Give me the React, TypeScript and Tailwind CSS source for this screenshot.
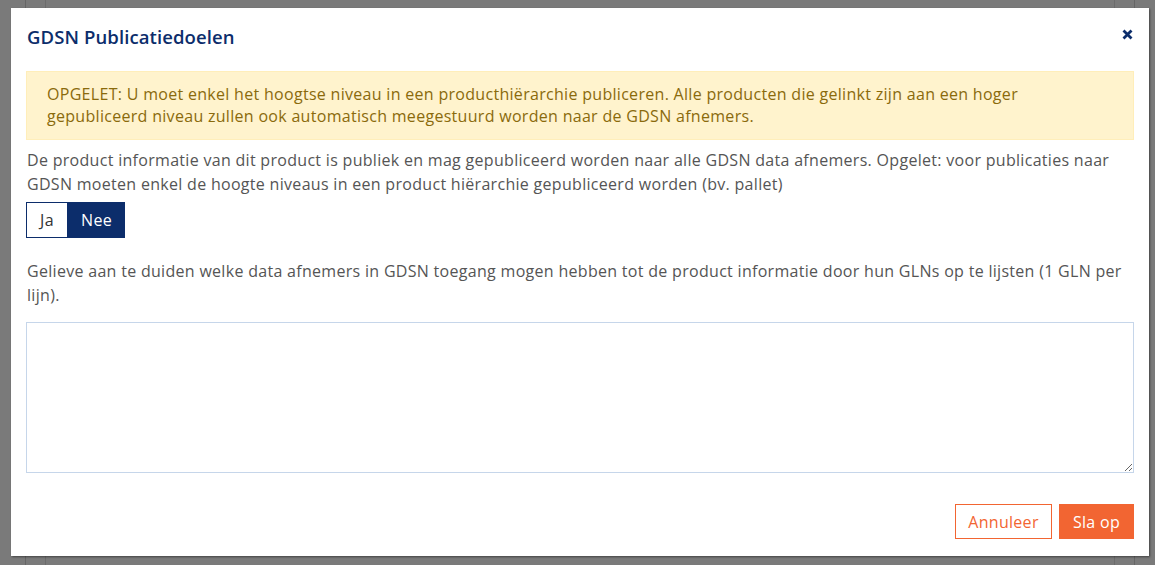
import { useState } from 'react'

const font = { fontFamily: '"Open Sans", "Liberation Sans", sans-serif' }

export default function App() {
    const [isPublic, setIsPublic] = useState(false)
    const [glns, setGlns] = useState('')

    return (
        <div className="relative h-[565px] w-full overflow-hidden bg-[#7a7a7a]" style={font}>
            {/* page behind the overlay */}
            <div className="absolute inset-y-0 left-[25px] right-[20px] border-x border-[#666]">
                <div className="absolute inset-y-0 left-[19px] right-[19px] border-x border-[#6c6c6c]" />
            </div>

            <div className="absolute left-[11px] top-[8px] flex w-[1138px] flex-col bg-white px-[15px] pb-[17px] tracking-[0.3px] shadow-[1px_1px_2px_rgba(0,0,0,0.45)]">
                <div className="flex h-[58px] items-center justify-between">
                    <h4 className="pl-[1px] text-[18.5px] font-semibold tracking-[0.1px] text-[#0c2d6b]">GDSN Publicatiedoelen</h4>
                    <button type="button" className="mb-[6px] mr-[1px] flex items-center text-[#0c2d6b]" aria-label="Sluiten">
                        <svg width="11" height="11" viewBox="0 0 11 11">
                            <path d="M1.5 1.5 L9.5 9.5 M9.5 1.5 L1.5 9.5" stroke="currentColor" strokeWidth="2.8" />
                        </svg>
                    </button>
                </div>

                <div className="mt-[5px] border border-[#ffeeba] bg-[#fff3cd] px-[20px] pb-[12px] pt-[11px] text-[16px] leading-[22px] text-[#8a6a0c]">
                    OPGELET: U moet enkel het hoogtse niveau in een producthiërarchie publiceren. Alle producten die gelinkt zijn aan een hoger
                    gepubliceerd niveau zullen ook automatisch meegestuurd worden naar de GDSN afnemers.
                </div>

                <p className="mt-[8px] pl-[1px] text-[16px] leading-[24px] text-[#555]">
                    De product informatie van dit product is publiek en mag gepubliceerd worden naar alle GDSN data afnemers. Opgelet: voor publicaties naar
                    GDSN moeten enkel de hoogte niveaus in een product hiërarchie gepubliceerd worden (bv. pallet)
                </p>

                <div className="mt-[6px] flex">
                    <button
                        type="button"
                        onClick={() => setIsPublic(true)}
                        className={`h-[36px] w-[42px] border border-[#0c2d6b] text-[16px] ${isPublic ? 'bg-[#0c2d6b] text-white' : 'bg-white text-[#333]'}`}
                    >
                        Ja
                    </button>
                    <button
                        type="button"
                        onClick={() => setIsPublic(false)}
                        className={`h-[36px] w-[57px] border border-[#0c2d6b] text-[16px] ${!isPublic ? 'bg-[#0c2d6b] text-white' : 'bg-white text-[#333]'}`}
                    >
                        Nee
                    </button>
                </div>

                <p className="mt-[21px] pl-[1px] text-[16px] leading-[24px] text-[#555]">
                    Gelieve aan te duiden welke data afnemers in GDSN toegang mogen hebben tot de product informatie door hun GLNs op te lijsten (1 GLN per
                    lijn).
                </p>

                <textarea
                    value={glns}
                    onChange={(e) => setGlns(e.target.value)}
                    className="mt-[15px] block h-[151px] w-full border border-[#c6d6ea] p-2 text-[16px] text-[#555] outline-none"
                />

                <div className="mt-[31px] flex justify-end gap-[7px]">
                    <button type="button" className="h-[35px] w-[97px] border border-[#f26532] bg-white text-[16px] text-[#f26532]">
                        Annuleer
                    </button>
                    <button type="button" className="h-[35px] w-[75px] bg-[#f26532] text-[16px] text-white">
                        Sla op
                    </button>
                </div>
            </div>
        </div>
    )
}
